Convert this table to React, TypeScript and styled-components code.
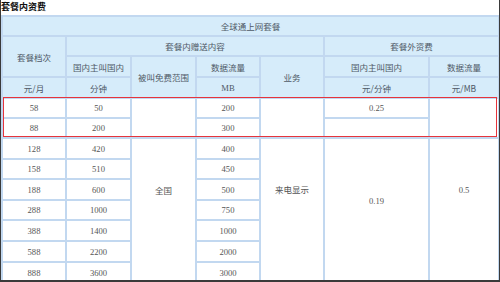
import styled, { createGlobalStyle } from "styled-components";

const GlobalStyle = createGlobalStyle`
  html, body {
    margin: 0;
    padding: 0;
    background: #ffffff;
  }
`;

const Frame = styled.div`
  width: 500px;
  height: 282px;
  box-sizing: border-box;
  border-left: 1px solid #3a3a3a;
  border-right: 1px solid #3a3a3a;
  border-bottom: 2px solid #3a3a3a;
  overflow: hidden;
  background: #fff;
  font-family: "Noto Sans CJK SC", "Noto Sans", sans-serif;
`;

const Title = styled.div`
  height: 15px;
  line-height: 13px;
  font-size: 9px;
  font-weight: bold;
  color: #111;
  padding-left: 0;
`;

const TableWrap = styled.div`
  position: relative;
  margin-right: 1px;
`;

const Table = styled.table`
  width: 497px;
  table-layout: fixed;
  border-collapse: collapse;
  font-size: 8.5px;
  color: #555;
`;

const Row = styled.tr<{ $h: number }>`
  height: ${(p) => p.$h}px;
`;

const Cell = styled.td<{ $head?: boolean; $num?: boolean; $top?: number }>`
  border: 2px solid #c2d8f0;
  padding: 0;
  text-align: center;
  line-height: 10px;
  background: ${(p) => (p.$head ? "#d6ecfa" : "#ffffff")};
  color: ${(p) => (p.$head ? "#4e5966" : "#555")};
  font-family: ${(p) =>
    p.$num
      ? '"Liberation Serif", "Noto Sans CJK SC", serif'
      : '"Noto Sans CJK SC", "Noto Sans", sans-serif'};
  font-size: ${(p) => (p.$num ? "8.6px" : "8.5px")};
  vertical-align: ${(p) => (p.$top !== undefined ? "top" : "middle")};
  padding-top: ${(p) => p.$top ?? 0}px;
  white-space: nowrap;
  overflow: hidden;
`;

const Highlight = styled.div`
  position: absolute;
  left: 2px;
  top: 82px;
  width: 494px;
  height: 40px;
  box-sizing: border-box;
  border: 1px solid #e6343c;
  pointer-events: none;
`;

const widths = [64, 65, 65, 64, 64, 105, 70];

const lower = [
  ["128", "420", "400"],
  ["158", "510", "450"],
  ["188", "600", "500"],
  ["288", "1000", "750"],
  ["388", "1400", "1000"],
  ["588", "2200", "2000"],
  ["888", "3600", "3000"],
];

const lowerHeights = [21, 20, 21, 20, 21, 21, 21];

export default function App() {
  return (
    <>
      <GlobalStyle />
      <Frame>
        <Title>套餐内资费</Title>
        <TableWrap>
          <Table>
            <colgroup>
              {widths.map((w, i) => (
                <col key={i} style={{ width: w }} />
              ))}
            </colgroup>
            <tbody>
              <Row $h={20}>
                <Cell $head colSpan={7}>
                  全球通上网套餐
                </Cell>
              </Row>
              <Row $h={20}>
                <Cell $head rowSpan={2}>
                  套餐档次
                </Cell>
                <Cell $head colSpan={4}>
                  套餐内赠送内容
                </Cell>
                <Cell $head colSpan={2}>
                  套餐外资费
                </Cell>
              </Row>
              <Row $h={21}>
                <Cell $head>国内主叫国内</Cell>
                <Cell $head rowSpan={2}>
                  被叫免费范围
                </Cell>
                <Cell $head>数据流量</Cell>
                <Cell $head rowSpan={2}>
                  业务
                </Cell>
                <Cell $head>国内主叫国内</Cell>
                <Cell $head>数据流量</Cell>
              </Row>
              <Row $h={21}>
                <Cell $head>元/月</Cell>
                <Cell $head>分钟</Cell>
                <Cell $head $num>
                  MB
                </Cell>
                <Cell $head>元/分钟</Cell>
                <Cell $head>元/MB</Cell>
              </Row>
              <Row $h={20}>
                <Cell $num>58</Cell>
                <Cell $num>50</Cell>
                <Cell rowSpan={2} />
                <Cell $num>200</Cell>
                <Cell rowSpan={2} />
                <Cell $num>0.25</Cell>
                <Cell rowSpan={2} />
              </Row>
              <Row $h={20}>
                <Cell $num>88</Cell>
                <Cell $num>200</Cell>
                <Cell $num>300</Cell>
                <Cell />
              </Row>
              {lower.map(([fee, mins, mb], i) => (
                <Row key={fee} $h={lowerHeights[i]}>
                  <Cell $num>{fee}</Cell>
                  <Cell $num>{mins}</Cell>
                  {i === 0 && (
                    <>
                      <Cell rowSpan={7} $top={46}>
                        全国
                      </Cell>
                    </>
                  )}
                  <Cell $num>{mb}</Cell>
                  {i === 0 && (
                    <>
                      <Cell rowSpan={7} $top={45}>
                        来电显示
                      </Cell>
                      <Cell $num rowSpan={7} $top={57}>
                        0.19
                      </Cell>
                      <Cell $num rowSpan={7} $top={46}>
                        0.5
                      </Cell>
                    </>
                  )}
                </Row>
              ))}
            </tbody>
          </Table>
          <Highlight />
        </TableWrap>
      </Frame>
    </>
  );
}
